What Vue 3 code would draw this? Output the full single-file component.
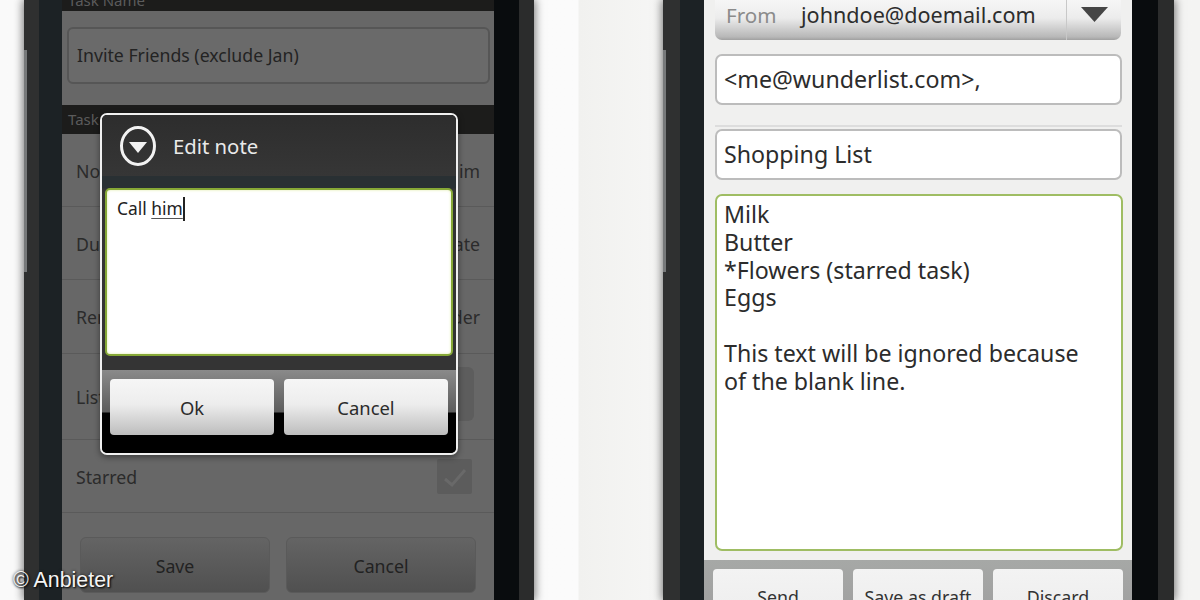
<template>
  <div class="page">
    <section class="phone phone-left">
      <span class="side-key"></span>
      <div class="bezel">
        <div class="screen task-screen">
          <div class="section-head cut">Task Name</div>
          <div class="name-wrap">
            <div class="name-input">Invite Friends (exclude Jan)</div>
          </div>
          <div class="section-head task-head">Task Details</div>
          <div v-for="row in rows" :key="row.label" class="row" :class="row.cls">
            <span>{{ row.label }}</span>
            <span v-if="row.value">{{ row.value }}</span>
            <span v-if="row.select" class="select-box">
              <i class="select-dot"></i>
            </span>
            <span v-if="row.check" class="check-box">
              <svg width="30" height="26" viewBox="0 0 30 26">
                <path d="M5 15l7 6L25 6" fill="none" stroke="#696969" stroke-width="3" />
              </svg>
            </span>
          </div>
          <div class="save-row">
            <div class="dim-btn">Save</div>
            <div class="dim-btn">Cancel</div>
          </div>

          <div class="dialog">
            <div class="dialog-title">
              <svg class="dialog-icon" width="38" height="42" viewBox="0 0 38 42">
                <ellipse cx="19" cy="21" rx="16.5" ry="18.5" fill="none" stroke="#f2f2f2" stroke-width="3" />
                <path d="M10 17h18L19 28z" fill="#f2f2f2" />
              </svg>
              <span>Edit note</span>
            </div>
            <div class="dialog-body">
              <div class="note-box">Call <span class="composing">him</span><i class="caret"></i></div>
            </div>
            <div class="dialog-actions">
              <div class="light-btn">Ok</div>
              <div class="light-btn">Cancel</div>
            </div>
          </div>
        </div>
      </div>
    </section>

    <section class="phone phone-right">
      <span class="side-key"></span>
      <div class="bezel">
        <div class="screen mail-screen">
          <div class="from-field">
            <span class="from-label">From</span>
            <span class="from-addr">johndoe@doemail.com</span>
            <span class="from-arrow">
              <svg width="27" height="15" viewBox="0 0 27 15"><path d="M0 0h27L13.5 15z" fill="#454545" /></svg>
            </span>
          </div>
          <div class="mail-input to-input">&lt;me@wunderlist.com&gt;,</div>
          <div class="mail-rule"></div>
          <div class="mail-input subject-input">Shopping List</div>
          <div class="mail-body">
            <div v-for="(line, i) in bodyLines" :key="i" class="body-line">{{ line }}</div>
          </div>
          <div class="mail-actions">
            <div v-for="label in mailButtons" :key="label" class="mail-btn">{{ label }}</div>
          </div>
        </div>
      </div>
    </section>

    <div class="credit">© Anbieter</div>
  </div>
</template>

<script setup>
const rows = [
  { label: 'Note', value: 'Call him', cls: 'row-note' },
  { label: 'Due date', value: 'No date', cls: 'row-due' },
  { label: 'Reminder', value: 'No reminder', cls: 'row-reminder' },
  { label: 'List', select: true, cls: 'row-list' },
  { label: 'Starred', check: true, cls: 'row-starred' }
]

const bodyLines = [
  'Milk',
  'Butter',
  '*Flowers (starred task)',
  'Eggs',
  '\u00a0',
  'This text will be ignored because',
  'of the blank line.'
]

const mailButtons = ['Send', 'Save as draft', 'Discard']
</script>

<style>
html,
body {
  margin: 0;
  overflow: hidden;
}
</style>

<style scoped>
.page {
  position: relative;
  width: 1200px;
  height: 600px;
  overflow: hidden;
  display: flex;
  background: linear-gradient(90deg, #fafafa 0, #fbfbfb 578px, #f1f1ef 579px, #f6f6f5 660px, #f4f4f3 100%);
  font-family: "Noto Sans", "Open Sans", sans-serif;
}

.phone {
  position: relative;
  flex: none;
  height: 600px;
  box-sizing: border-box;
  border-left: 15px solid #2f3030;
  border-right: 15px solid #2b2c2c;
  box-shadow: 0 0 9px 1px rgba(0, 0, 0, 0.55);
}

.phone-left {
  width: 510px;
  margin-left: 24px;
}

.phone-right {
  width: 511px;
  margin-left: 129px;
  border-left-width: 17px;
  border-right-width: 16px;
}

.side-key {
  position: absolute;
  left: -15px;
  top: 50px;
  width: 3px;
  height: 222px;
  background: #77797a;
}

.phone-right .side-key {
  left: -17px;
}

.bezel {
  height: 100%;
  box-sizing: border-box;
  border-left: 23px solid #1c2225;
  border-right: 25px solid #090c0e;
}

.phone-right .bezel {
  border-left-width: 24px;
  border-right-width: 26px;
}

.screen {
  position: relative;
  height: 100%;
  overflow: hidden;
}

/* left phone, dimmed by the dialog */
.task-screen {
  background: #676767;
  color: #232323;
  font-size: 17.7px;
}

.section-head {
  background: #1c1c1b;
  color: #5b5b5b;
  font-size: 15px;
  padding-left: 6px;
  box-sizing: border-box;
}

.section-head.cut {
  height: 11px;
  line-height: 0;
  overflow: hidden;
}

.task-head {
  height: 29px;
  line-height: 29px;
}

.name-wrap {
  height: 94px;
  box-sizing: border-box;
  padding: 16px 4px 0 5px;
}

.name-input {
  height: 57px;
  box-sizing: border-box;
  border: 2px solid #565656;
  border-radius: 6px;
  background: #6a6a6a;
  padding-left: 8px;
  line-height: 53px;
}

.row {
  display: flex;
  justify-content: space-between;
  align-items: center;
  box-sizing: border-box;
  border-bottom: 1px solid #5a5a5a;
  padding: 1px 14px 0;
  color: #2b2b2b;
}

.row-note {
  height: 73px;
}

.row-due {
  height: 73px;
}

.row-reminder {
  height: 74px;
}

.row-list {
  height: 86px;
}

.row-starred {
  height: 73px;
}

.select-box {
  width: 60px;
  height: 54px;
  margin-right: 6px;
  margin-bottom: 6px;
  border-radius: 6px;
  background: #5d5d5d;
  position: relative;
}

.select-dot {
  position: absolute;
  left: 4px;
  top: 19px;
  width: 4px;
  height: 6px;
  background: #222;
}

.check-box {
  display: flex;
  align-items: center;
  justify-content: center;
  width: 35px;
  height: 35px;
  margin-right: 8px;
  background: #5c5c5c;
  border-radius: 2px;
}

.save-row {
  display: flex;
  gap: 16px;
  padding: 24px 18px 0;
}

.dim-btn {
  flex: 1;
  height: 56px;
  line-height: 56px;
  text-align: center;
  border: 1px solid #5a5a5a;
  border-radius: 6px;
  background: linear-gradient(#646464, #505050);
  box-sizing: border-box;
  color: #222;
}

.dialog {
  position: absolute;
  left: 38px;
  top: 113px;
  width: 358px;
  height: 342px;
  box-sizing: border-box;
  border: 2px solid #f0f0f0;
  border-radius: 7px;
  overflow: hidden;
  display: flex;
  flex-direction: column;
  background: #000;
  box-shadow: 0 2px 6px rgba(0, 0, 0, 0.45);
}

.dialog-title {
  flex: none;
  height: 61px;
  display: flex;
  align-items: center;
  gap: 16px;
  padding-left: 17px;
  box-sizing: border-box;
  background: linear-gradient(#2d2d2d, #363636);
  color: #e9e9e9;
  font-size: 20.3px;
}

.dialog-icon {
  flex: none;
}

.dialog-body {
  flex: none;
  height: 194px;
  box-sizing: border-box;
  padding: 12px 3px 14px;
  background: linear-gradient(#293033 0, #293033 12px, #343434 13px);
}

.note-box {
  height: 100%;
  box-sizing: border-box;
  border: 2px solid #86a836;
  border-radius: 5px;
  background: #fff;
  box-shadow: inset 0 0 3px #dfeca8;
  padding: 4px 10px;
  font-size: 17.4px;
  line-height: 28px;
  color: #222;
}

.composing {
  text-decoration: underline;
  text-decoration-color: #555;
  text-underline-offset: 3px;
}

.caret {
  display: inline-block;
  width: 2px;
  height: 24px;
  background: #222;
  vertical-align: -6px;
}

.dialog-actions {
  flex: 1;
  display: flex;
  gap: 10px;
  padding: 9px 8px 0;
  background: linear-gradient(#8a8a8a 0, #5c5c5c 42px, #000 43px);
}

.light-btn {
  flex: 1;
  height: 56px;
  line-height: 58px;
  text-align: center;
  border-radius: 4px;
  background: linear-gradient(#f6f6f6, #ededed 45%, #bdbdbd);
  color: #2b2b2b;
  font-size: 18.4px;
}

/* right phone, mail composer */
.mail-screen {
  display: flex;
  flex-direction: column;
  background: #f0f0ef;
  color: #2c2c2c;
  font-size: 23.2px;
  padding: 0 10px 0 11px;
  box-sizing: border-box;
}

.from-field {
  flex: none;
  height: 40px;
  margin-right: 1px;
  display: flex;
  align-items: flex-end;
  box-sizing: border-box;
  border-radius: 0 0 7px 7px;
  background: linear-gradient(#f6f6f6 0, #ececec 45%, #b8b8b8 92%, #a0a0a0);
  font-size: 21.6px;
  line-height: 30px;
  padding-left: 11px;
  padding-bottom: 10px;
}

.from-label {
  color: #8b8b8b;
  width: 75px;
  font-size: 20.6px;
}

.from-addr {
  flex: 1;
  color: #2d2d2d;
}

.from-arrow {
  align-self: stretch;
  width: 55px;
  margin-bottom: -10px;
  display: flex;
  justify-content: center;
  padding-top: 7px;
  box-sizing: border-box;
  border-left: 1px solid #c8c8c8;
}

.mail-input {
  flex: none;
  height: 51px;
  box-sizing: border-box;
  border: 2px solid #bcbcbc;
  border-radius: 7px;
  background: #fff;
  padding-left: 7px;
  line-height: 47px;
}

.to-input {
  margin-top: 14px;
}

.mail-rule {
  flex: none;
  height: 2px;
  margin: 20px 0 2px;
  background: #dddddd;
}

.mail-body {
  flex: none;
  height: 357px;
  margin-top: 14px;
  margin-right: -1px;
  box-sizing: border-box;
  border: 2px solid #9fbd63;
  border-radius: 7px;
  background: #fff;
  padding: 5px 7px;
  line-height: 27.8px;
}

.mail-actions {
  position: absolute;
  left: 0;
  right: 0;
  top: 560px;
  height: 40px;
  display: flex;
  gap: 10px;
  padding: 9px 9px 0;
  background: linear-gradient(#a6a8a6, #a0a0a0);
}

.mail-btn {
  flex: 1;
  height: 60px;
  border-radius: 4px 4px 0 0;
  background: linear-gradient(#f3f3f3, #ececec);
  text-align: center;
  font-size: 17.8px;
  line-height: 56px;
  color: #333;
}

.credit {
  position: absolute;
  left: 13px;
  top: 566px;
  font-family: "Liberation Sans", Arial, sans-serif;
  font-size: 21.4px;
  line-height: 28px;
  color: #f4f4f4;
  text-shadow: 1px 1px 2px #000, 0 0 3px #222;
}
</style>
